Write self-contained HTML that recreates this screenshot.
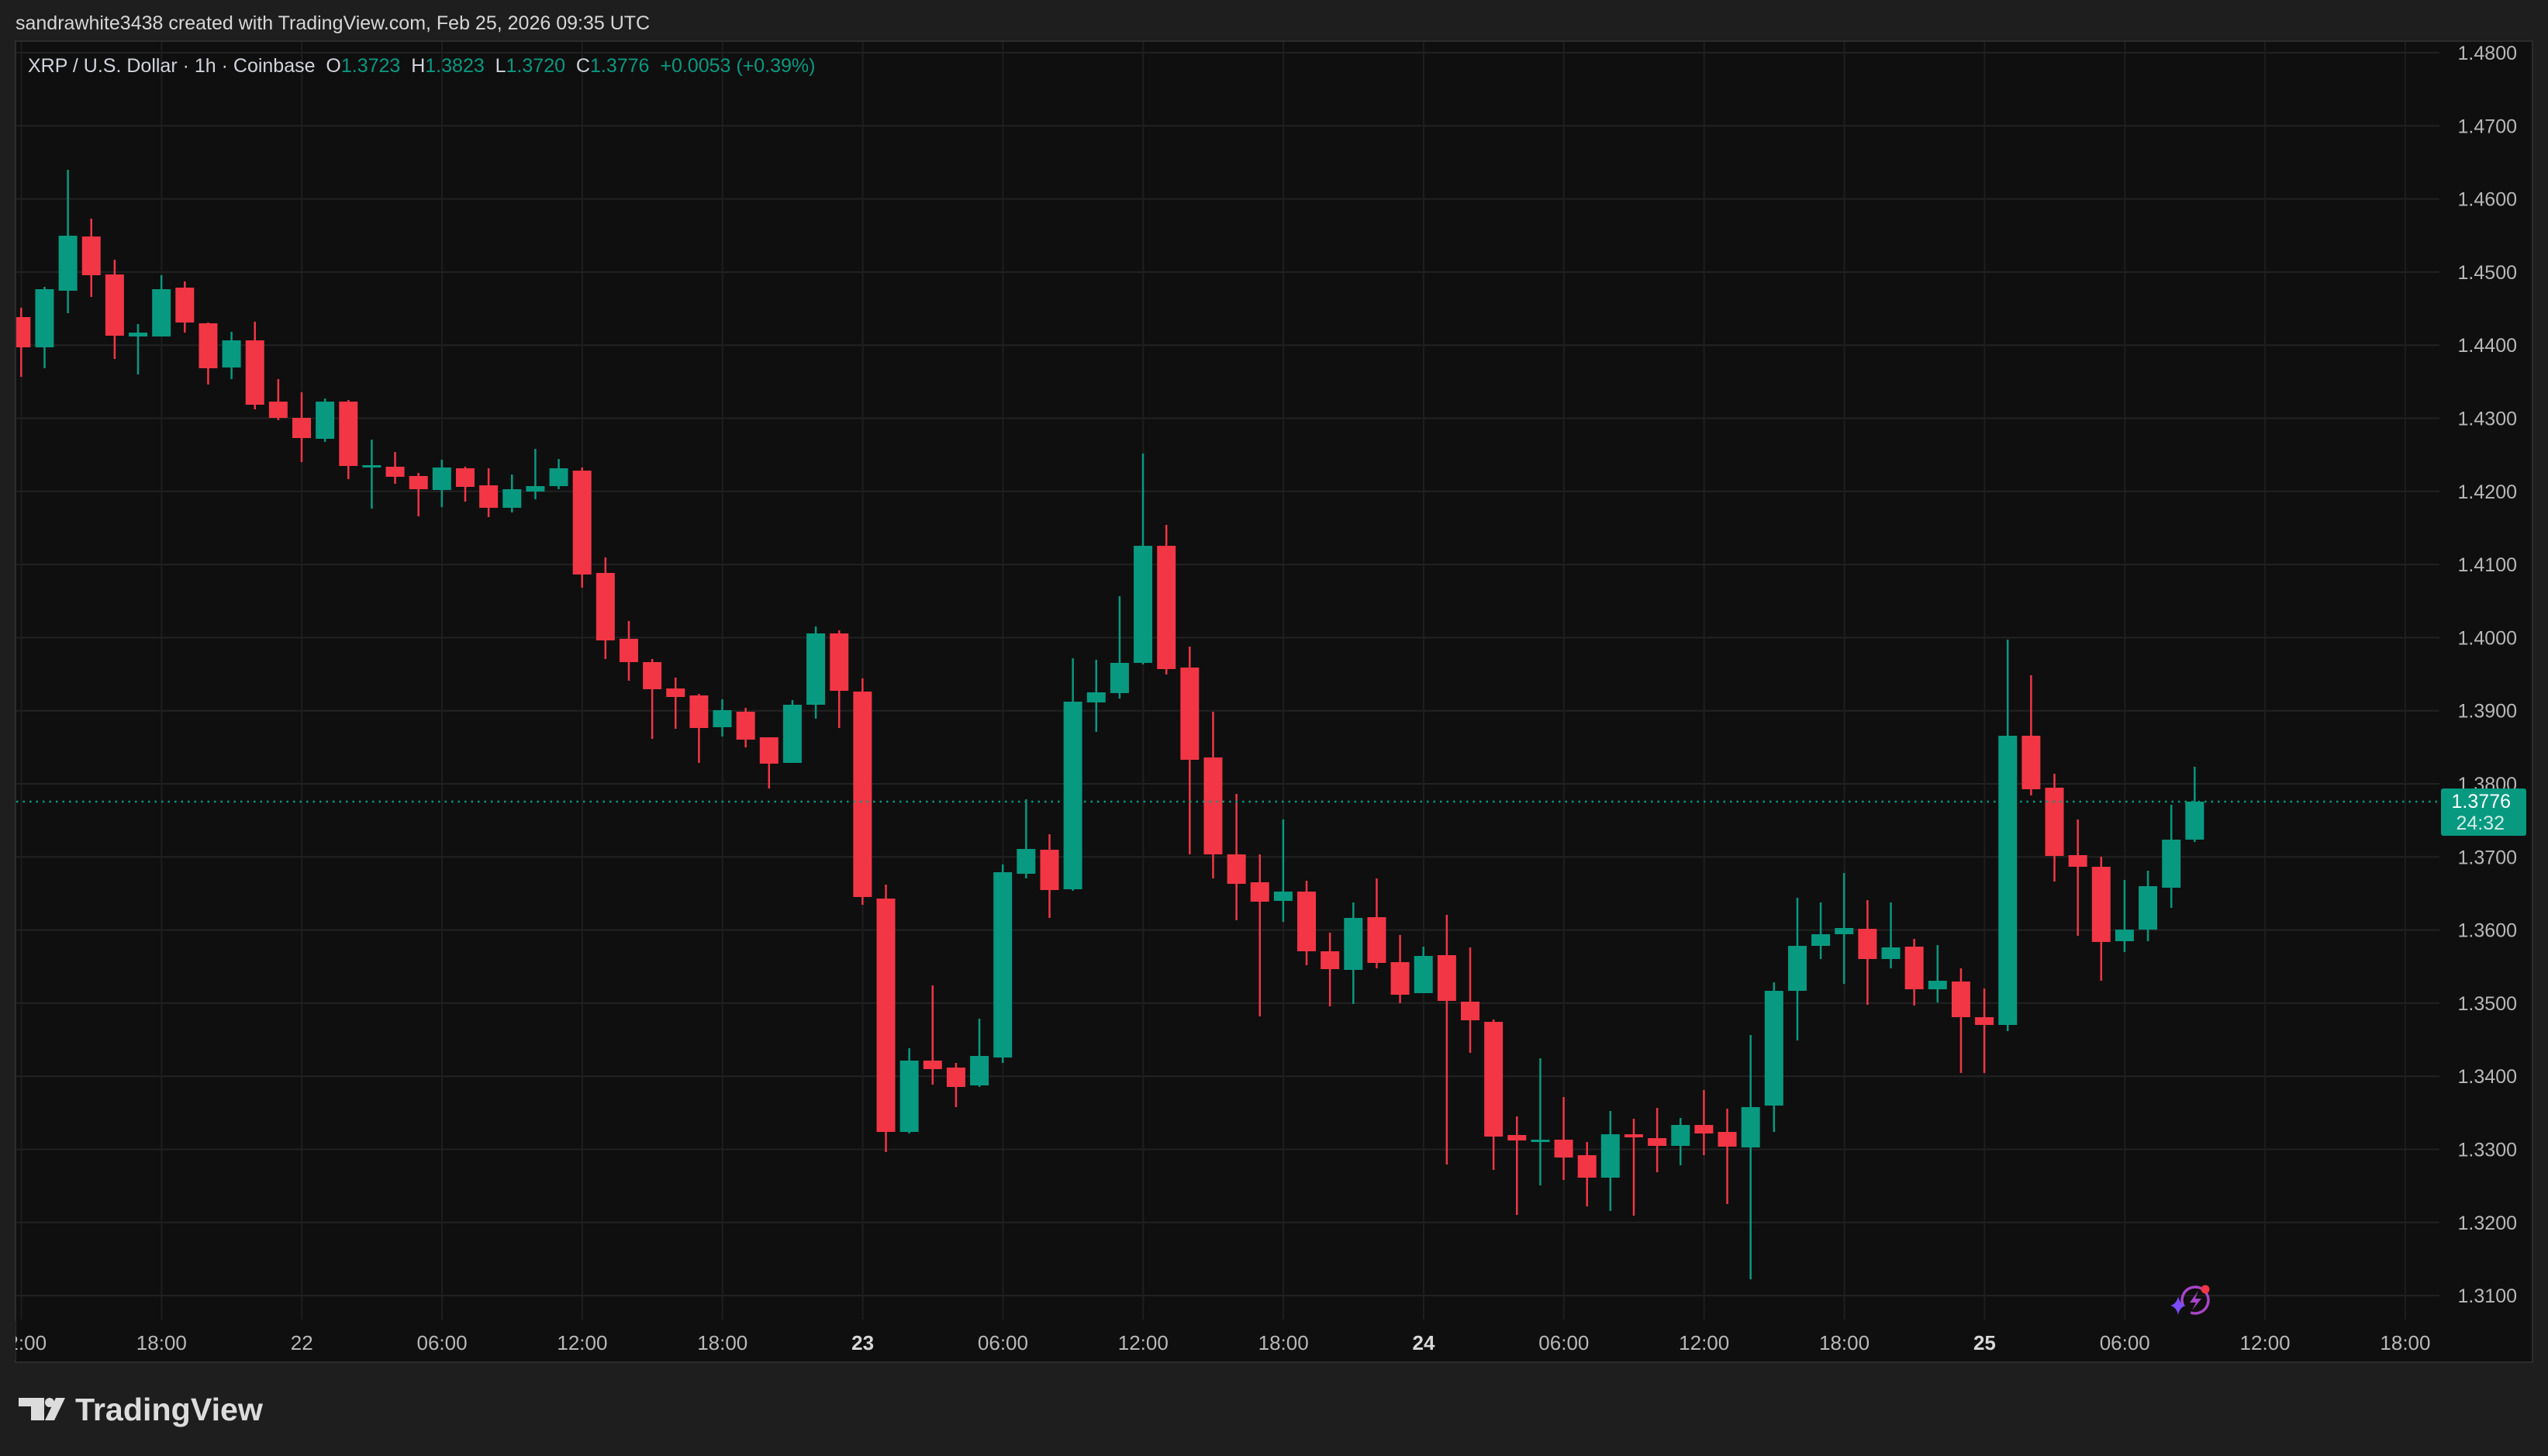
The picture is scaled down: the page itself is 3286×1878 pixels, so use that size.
<!DOCTYPE html>
<html><head><meta charset="utf-8">
<style>
html,body{margin:0;padding:0;}
body{width:3286px;height:1878px;background:#1e1e1e;position:relative;overflow:hidden;font-family:"Liberation Sans",sans-serif;}
.t{position:absolute;white-space:nowrap;}
</style></head>
<body>
<div class="t" style="left:20px;top:16px;font-size:25px;color:#d6d6d6;">sandrawhite3438 created with TradingView.com, Feb 25, 2026 09:35 UTC</div>
<svg id="ch" style="position:absolute;left:0;top:0" width="3286" height="1878" xmlns="http://www.w3.org/2000/svg">
<rect x="20" y="53" width="3246" height="1704" fill="#0f0f0f" stroke="#2c2c2c" stroke-width="2"/>
<g id="grid"></g>
<g id="candles"></g>
<line x1="21" y1="1034" x2="3146" y2="1034" stroke="#089981" stroke-width="2.5" stroke-dasharray="2.5,6"/>
<g id="plabels" font-family="Liberation Sans, sans-serif" font-size="25" fill="#b8b8b8" text-anchor="end"></g>
<g id="tlabels" font-family="Liberation Sans, sans-serif" font-size="26" fill="#b8b8b8" text-anchor="middle"></g>
<rect x="3148" y="1017" width="110" height="61" rx="3" fill="#089981"/>
<text x="3238" y="1042" font-family="Liberation Sans, sans-serif" font-size="25" fill="#ffffff" text-anchor="end">1.3776</text>
<text x="3230" y="1070" font-family="Liberation Sans, sans-serif" font-size="25" fill="#cfeee6" text-anchor="end">24:32</text>
<circle cx="2831" cy="1677" r="17" fill="none" stroke="#a845c9" stroke-width="3.5" stroke-dasharray="80,14" transform="rotate(200 2831 1677)"/>
<path d="M2835 1665 L2824 1680 L2832 1680 L2827 1690 L2839 1675 L2831 1675 Z" fill="#a845c9"/>
<circle cx="2844" cy="1663" r="5.5" fill="#f23645"/>
<path d="M2809 1672 Q2811 1682 2819 1684 Q2811 1686 2809 1696 Q2807 1686 2799 1684 Q2807 1682 2809 1672 Z" fill="#7b4dff"/>
<path d="M24 1803 H57 V1832 H40 V1814 H24 Z" fill="#dcdcdc"/>
<circle cx="64" cy="1809" r="6" fill="#dcdcdc"/>
<path d="M72 1803 H84 L70 1832 H58 Z" fill="#dcdcdc"/>
<text x="97" y="1832" font-family="Liberation Sans, sans-serif" font-weight="bold" font-size="41" fill="#dcdcdc" textLength="242" lengthAdjust="spacingAndGlyphs">TradingView</text>
</svg>
<div class="t" style="left:36px;top:71px;font-size:25px;color:#d1d4dc;">XRP / U.S. Dollar · 1h · Coinbase&nbsp; O<span style="color:#089981">1.3723</span>&nbsp; H<span style="color:#089981">1.3823</span>&nbsp; L<span style="color:#089981">1.3720</span>&nbsp; C<span style="color:#089981">1.3776</span>&nbsp; <span style="color:#089981">+0.0053 (+0.39%)</span></div>
<script>
var NS="http://www.w3.org/2000/svg";
function el(p,n,a,txt){var e=document.createElementNS(NS,n);for(var k in a)e.setAttribute(k,a[k]);if(txt!==undefined)e.textContent=txt;p.appendChild(e);return e;}
var grid=document.getElementById("grid");
var pl=document.getElementById("plabels");
for(var k=0;k<18;k++){var y=68+k*94.3;
 el(grid,"line",{x1:21,x2:3146,y1:y,y2:y,stroke:"#222222","stroke-width":2});
 el(pl,"text",{x:3246,y:y+9},(1.48-k*0.01).toFixed(4));}
var tl=document.getElementById("tlabels");
var labs=["12:00","18:00","22","06:00","12:00","18:00","23","06:00","12:00","18:00","24","06:00","12:00","18:00","25","06:00","12:00","18:00"];
for(var i=0;i<labs.length;i++){var x=27.5+i*180.85;
 el(grid,"line",{x1:x,x2:x,y1:54,y2:1702,stroke:"#1e1e1e","stroke-width":2});
 var a={x:x,y:1741};if(labs[i].length==2&&labs[i]!="22"){a["font-weight"]="bold";a.fill="#d8d8d8";}
 el(tl,"text",a,labs[i]);}
var G="#089981",R="#f23645";
var d=[
[-12,R,409,448,397,486],[-11,G,373,448,370,475],[-10,G,304,375,219,404],[-9,R,305,355,282,383],
[-8,R,354,433,335,463],[-7,G,429,434,418,483],[-6,G,373,434,355,434],[-5,R,371,416,363,429],
[-4,R,417,475,416,496],[-3,G,439,474,428,489],[-2,R,439,522,415,528],[-1,R,518,539,489,542],
[0,R,539,565,506,596],[1,G,518,566,514,570],[2,R,518,601,516,618],[3,G,600,602,567,656],
[4,R,602,615,583,624],[5,R,614,631,610,666],[6,G,603,632,593,654],[7,R,604,628,602,647],
[8,R,626,655,604,667],[9,G,631,655,612,661],[10,G,627,634,579,644],[11,G,604,627,592,631],
[12,R,607,741,603,758],[13,R,739,826,719,850],[14,R,824,854,801,878],[15,R,854,889,850,953],
[16,R,888,899,874,940],[17,R,897,939,895,984],[18,G,916,938,902,950],[19,R,918,954,913,964],
[20,R,951,985,951,1017],[21,G,909,984,903,984],[22,G,817,909,808,927],[23,R,817,891,813,939],
[24,R,892,1157,875,1167],[25,R,1159,1460,1141,1486],[26,G,1368,1460,1352,1462],[27,R,1368,1379,1271,1399],
[28,R,1377,1402,1371,1428],[29,G,1362,1400,1314,1402],[30,G,1125,1364,1115,1371],[31,G,1095,1127,1031,1133],
[32,R,1096,1148,1076,1184],[33,G,905,1147,849,1149],[34,G,893,906,851,944],[35,G,855,894,769,901],
[36,G,704,855,585,857],[37,R,704,863,677,870],[38,R,861,980,834,1102],[39,R,977,1102,918,1133],
[40,R,1102,1140,1024,1187],[41,R,1138,1163,1102,1311],[42,G,1150,1162,1057,1189],[43,R,1150,1227,1136,1245],
[44,R,1227,1250,1203,1298],[45,G,1184,1251,1164,1295],[46,R,1183,1242,1133,1249],[47,R,1241,1283,1206,1294],
[48,G,1233,1281,1221,1281],[49,R,1232,1291,1180,1502],[50,R,1292,1316,1222,1358],[51,R,1318,1466,1315,1509],
[52,R,1464,1471,1440,1567],[53,G,1470,1472,1365,1529],[54,R,1470,1493,1415,1522],[55,R,1490,1519,1473,1556],
[56,G,1463,1519,1433,1562],[57,R,1463,1467,1443,1568],[58,R,1468,1478,1429,1512],[59,G,1451,1478,1442,1503],
[60,R,1451,1462,1406,1490],[61,R,1460,1479,1430,1553],[62,G,1428,1480,1335,1650],[63,G,1278,1426,1267,1460],
[64,G,1220,1278,1158,1342],[65,G,1205,1220,1164,1237],[66,G,1197,1205,1126,1269],[67,R,1198,1237,1161,1296],
[68,G,1222,1237,1164,1249],[69,R,1221,1276,1211,1297],[70,G,1265,1276,1219,1293],[71,R,1266,1312,1249,1384],
[72,R,1312,1322,1275,1384],[73,G,949,1322,825,1330],[74,R,949,1018,871,1026],[75,R,1016,1104,998,1137],
[76,R,1103,1118,1057,1207],[77,R,1118,1215,1105,1265],[78,G,1199,1214,1135,1228],[79,G,1143,1199,1123,1214],
[80,G,1083,1145,1038,1171],[81,G,1034,1083,989,1086]];
var cg=document.getElementById("candles");
for(var i=0;i<d.length;i++){var c=d[i];var x=389+c[0]*30.14;
 var bx=x-12,bw=24; if(bx<21){bw-= (21-bx);bx=21;}
 el(cg,"rect",{x:x-1.25,y:c[4],width:2.5,height:c[5]-c[4],fill:c[1]});
 var h=Math.max(c[3]-c[2],3);
 el(cg,"rect",{x:bx,y:c[2],width:bw,height:h,fill:c[1]});}
el(document.getElementById("ch"),"rect",{x:0,y:1704,width:20,height:50,fill:"#1e1e1e"});
</script>
</body></html>
